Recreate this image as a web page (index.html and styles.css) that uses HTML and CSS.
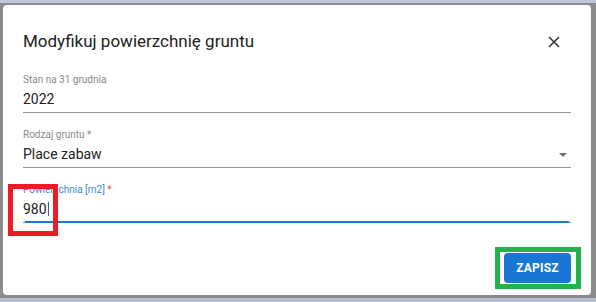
FILE: index.html
```html
<!DOCTYPE html>
<html lang="pl">
<head>
<meta charset="utf-8">
<title>Modyfikuj powierzchnię gruntu</title>
<link rel="stylesheet" href="styles.css">
</head>
<body>
<div class="page">
  <div class="band-top"></div>
  <div class="dialog">
    <div class="dialog-header">
      <h2 class="dialog-title">Modyfikuj powierzchnię gruntu</h2>
      <button class="close-btn" type="button" aria-label="Zamknij">
        <svg width="12" height="12" viewBox="0 0 12 12"><path d="M1 1 L11 11 M11 1 L1 11" stroke="#333" stroke-width="1.5" fill="none"/></svg>
      </button>
    </div>
    <div class="fields">
      <div class="field">
        <div class="field-label">Stan na 31 grudnia</div>
        <div class="field-value">2022</div>
      </div>
      <div class="field">
        <div class="field-label">Rodzaj gruntu *</div>
        <div class="field-value select-value"><span>Place zabaw</span><span class="arrow"></span></div>
      </div>
      <div class="field focused">
        <div class="field-label">Powierzchnia [m2] <span class="req">*</span></div>
        <div class="field-value">980<span class="caret"></span></div>
      </div>
    </div>
    <div class="dialog-actions">
      <button class="save-btn" type="button">ZAPISZ</button>
    </div>
  </div>
  <div class="band-bottom"></div>
  <div class="mark mark-red"></div>
  <div class="mark mark-green"></div>
</div>
</body>
</html>
```

FILE: styles.css
```css
html, body {
  margin: 0;
  padding: 0;
}
body {
  width: 596px;
  height: 302px;
  overflow: hidden;
  background: #8b8b8b;
  font-family: Roboto, "Liberation Sans", Arial, sans-serif;
}
.page {
  position: relative;
  width: 596px;
  height: 302px;
  display: flex;
  flex-direction: column;
}
.band-top {
  height: 3px;
  background: #c1c7d6;
}
.band-bottom {
  margin-top: 3px;
  height: 4px;
  background: #b7bfcf;
}
.dialog {
  margin: 2px 5px 0 3px;
  height: 290px;
  background: #fff;
  border-radius: 4px;
  display: flex;
  flex-direction: column;
  box-sizing: border-box;
}
.dialog-header {
  display: flex;
  align-items: center;
  justify-content: space-between;
  padding: 26px 25px 0 20px;
  height: 20px;
}
.dialog-title {
  margin: 0;
  font-size: 17px;
  line-height: 20px;
  font-weight: 400;
  color: #222;
}
.close-btn {
  width: 24px;
  height: 24px;
  padding: 0;
  border: 0;
  background: transparent;
  display: flex;
  align-items: center;
  justify-content: center;
  margin-top: 2px;
}
.fields {
  margin-top: 7px;
  padding: 0 20px;
  display: flex;
  flex-direction: column;
}
.field {
  height: 55px;
  box-sizing: border-box;
  padding-top: 16px;
  border-bottom: 1px solid #949494;
  position: relative;
}
.field-label {
  font-size: 10px;
  line-height: 12px;
  color: #8a8a8a;
}
.field-value {
  margin-top: 3px;
  font-size: 14px;
  line-height: 20px;
  color: #222;
  display: flex;
  align-items: center;
}
.select-value {
  justify-content: space-between;
}
.arrow {
  width: 0;
  height: 0;
  border-left: 4px solid transparent;
  border-right: 4px solid transparent;
  border-top: 4px solid #6e6e6e;
  margin-right: 4px;
  margin-top: 1px;
}
.focused .field-label {
  color: #3a8ad8;
}
.req {
  color: #f0504a;
}
.focused::after {
  content: "";
  position: absolute;
  left: 2px;
  right: 2px;
  bottom: -1px;
  height: 2px;
  background: #1976d2;
}
.caret {
  display: inline-block;
  width: 1px;
  height: 14px;
  background: #2b5f9e;
  margin-left: 1px;
}
.dialog-actions {
  margin-top: auto;
  display: flex;
  justify-content: flex-end;
  padding: 0 20px 12px;
}
.save-btn {
  width: 67px;
  height: 30px;
  border: 0;
  border-radius: 4px;
  background: #1976d2;
  color: #fff;
  font-family: Roboto, "Liberation Sans", Arial, sans-serif;
  font-size: 12px;
  font-weight: 700;
  letter-spacing: 0.2px;
  padding: 0;
}
.mark {
  position: absolute;
  box-sizing: border-box;
  border: 5px solid;
}
.mark-red {
  left: 8px;
  top: 184px;
  width: 50px;
  height: 52px;
  border-color: #ed1c24;
}
.mark-green {
  left: 495px;
  top: 247px;
  width: 86px;
  height: 42px;
  border-color: #22b14c;
}
```
